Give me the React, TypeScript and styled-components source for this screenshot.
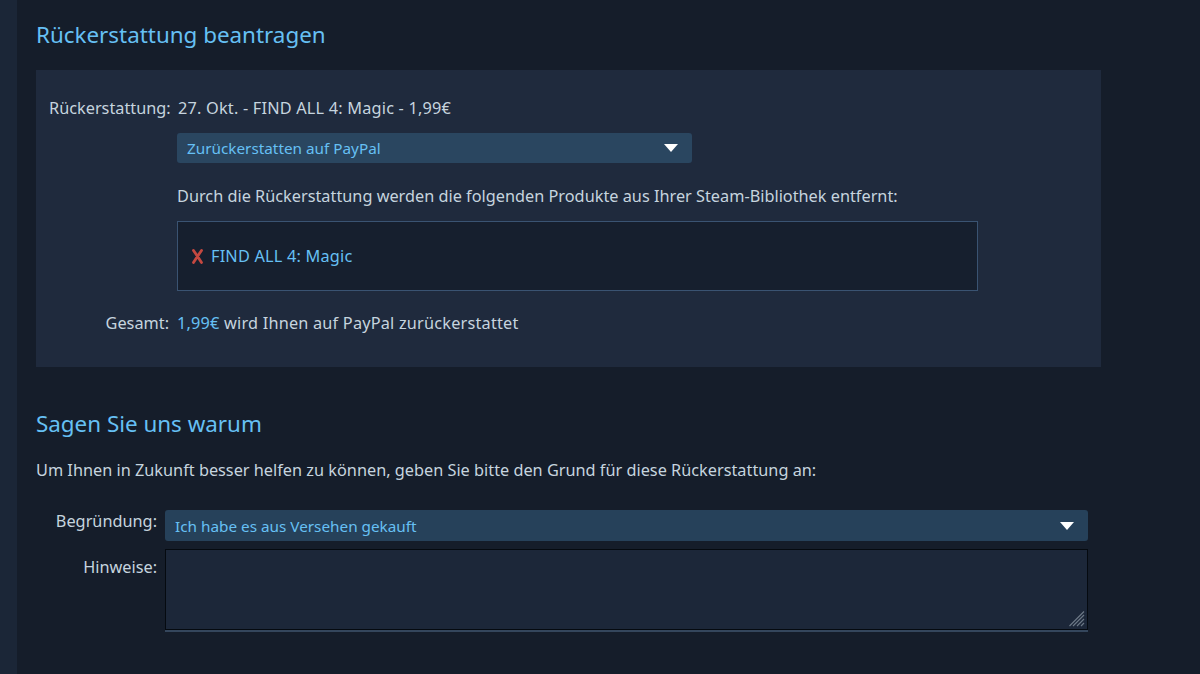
import styled, { createGlobalStyle } from "styled-components";

const GlobalStyle = createGlobalStyle`
  html, body {
    margin: 0;
    padding: 0;
    background: #141c28;
  }
  body {
    font-family: "Noto Sans", "Open Sans", Arial, sans-serif;
    color: #c6d4df;
  }
`;

const Page = styled.div`
  display: flex;
  min-height: 674px;
  width: 1200px;
  overflow: hidden;
`;

const SideStrip = styled.div`
  width: 17px;
  flex-shrink: 0;
  background: #1b2637;
`;

const Main = styled.div`
  flex: 1;
  padding: 0 99px 0 19px;
  background: #151d2a;
`;

const Heading = styled.h2<{ $top: number }>`
  margin: ${(p) => p.$top}px 0 0;
  font-size: 22.4px;
  font-weight: 400;
  line-height: 30px;
  color: #66c0f4;
`;

const Panel = styled.div`
  margin-top: 20px;
  background: #1f2a3d;
  padding: 27px 13px 33px;
`;

const Row = styled.div<{ $top?: number }>`
  display: flex;
  align-items: flex-start;
  margin-top: ${(p) => p.$top ?? 0}px;
  font-size: 16.3px;
  line-height: 22px;
`;

const Label = styled.div<{ $width: number }>`
  width: ${(p) => p.$width}px;
  flex-shrink: 0;
  text-align: right;
  padding-right: 8px;
  box-sizing: border-box;
  white-space: nowrap;
  color: #c6d4df;
`;

const Value = styled.div`
  flex: 1;
  min-width: 0;
  letter-spacing: 0.2px;
`;

const Select = styled.div<{ $width?: number; $height: number; $bg: string }>`
  display: flex;
  align-items: center;
  justify-content: space-between;
  width: ${(p) => (p.$width ? `${p.$width}px` : "100%")};
  height: ${(p) => p.$height}px;
  box-sizing: border-box;
  padding: 0 14px 0 10px;
  background: ${(p) => p.$bg};
  border-radius: 3px;
  color: #66c0f4;
  font-size: 15.3px;
`;

const Caret = () => (
  <svg width="14" height="8" viewBox="0 0 14 8">
    <path d="M0 0 H14 L7 8 Z" fill="#ffffff" />
  </svg>
);

const Indented = styled.div<{ $top: number }>`
  margin: ${(p) => p.$top}px 0 0 128px;
  font-size: 16.3px;
  line-height: 22px;
`;

const ProductBox = styled.div`
  margin: 14px 0 0 128px;
  width: 801px;
  height: 70px;
  box-sizing: border-box;
  border: 1px solid #3a5372;
  background: #161f2e;
  display: flex;
  align-items: center;
  gap: 7px;
  padding: 0 13px;
  font-size: 16.3px;
  letter-spacing: 0.2px;
  color: #66c0f4;
`;

const RemoveMark = () => (
  <svg width="13" height="15" viewBox="0 0 13 15">
    <path
      d="M2.5 1.5 Q7 8 10.5 13.5 M10.5 1.5 Q6 8 2.5 13.5"
      stroke="#c44840"
      strokeWidth="2.8"
      strokeLinecap="round"
      fill="none"
    />
  </svg>
);

const Highlight = styled.span`
  color: #66c0f4;
`;

const Paragraph = styled.p`
  margin: 20px 0 0;
  font-size: 16.3px;
  line-height: 22px;
`;

const FormArea = styled.div`
  margin-top: 29px;
  padding-right: 13px;
`;

const NotesWrap = styled.div`
  position: relative;
  flex: 1;
  border-bottom: 2px solid #34465c;
`;

const Notes = styled.textarea`
  display: block;
  width: 100%;
  height: 81px;
  box-sizing: border-box;
  margin: 0;
  background: #1c2739;
  border: 1px solid #050a10;
  border-radius: 0;
  resize: none;
  outline: none;
  color: #c6d4df;
  font-family: inherit;
  font-size: 15px;
`;

const Grip = styled.svg`
  position: absolute;
  right: 3px;
  bottom: 3px;
`;

export default function App() {
  return (
    <>
      <GlobalStyle />
      <Page>
        <SideStrip />
        <Main>
          <Heading $top={20}>Rückerstattung beantragen</Heading>
          <Panel>
            <Row>
              <Label $width={129}>Rückerstattung:</Label>
              <Value>27. Okt. - FIND ALL 4: Magic - 1,99€</Value>
            </Row>
            <Indented $top={14}>
              <Select $width={515} $height={30} $bg="#2a4660">
                <span>Zurückerstatten auf PayPal</span>
                <Caret />
              </Select>
            </Indented>
            <Indented $top={22}>
              Durch die Rückerstattung werden die folgenden Produkte aus Ihrer
              Steam-Bibliothek entfernt:
            </Indented>
            <ProductBox>
              <RemoveMark />
              <span>FIND ALL 4: Magic</span>
            </ProductBox>
            <Row $top={21}>
              <Label $width={128}>Gesamt:</Label>
              <Value>
                <Highlight>1,99€</Highlight> wird Ihnen auf PayPal
                zurückerstattet
              </Value>
            </Row>
          </Panel>

          <Heading $top={42}>Sagen Sie uns warum</Heading>
          <Paragraph>
            Um Ihnen in Zukunft besser helfen zu können, geben Sie bitte den
            Grund für diese Rückerstattung an:
          </Paragraph>
          <FormArea>
            <Row>
              <Label $width={129}>Begründung:</Label>
              <Select $height={31} $bg="#26415a">
                <span>Ich habe es aus Versehen gekauft</span>
                <Caret />
              </Select>
            </Row>
            <Row $top={8}>
              <Label $width={129}>
                <div style={{ paddingTop: 7 }}>Hinweise:</div>
              </Label>
              <NotesWrap>
                <Notes />
                <Grip width="16" height="16" viewBox="0 0 16 16">
                  <path
                    d="M15 4 L4 15 M15 8 L8 15 M15 12 L12 15 M15 0.5 L0.5 15"
                    stroke="#6b7785"
                    strokeWidth="1.2"
                  />
                </Grip>
              </NotesWrap>
            </Row>
          </FormArea>
        </Main>
      </Page>
    </>
  );
}
